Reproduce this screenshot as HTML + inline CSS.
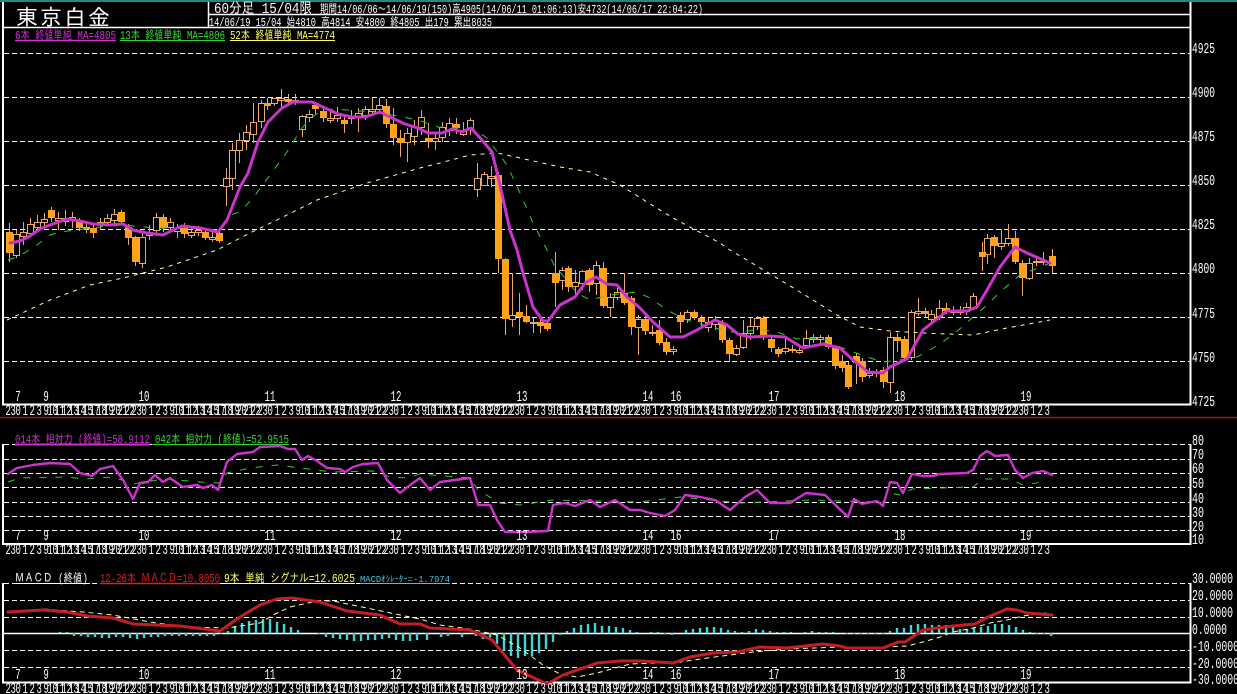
<!DOCTYPE html>
<html lang="ja"><head><meta charset="utf-8"><title>東京白金</title>
<style>
html,body{margin:0;padding:0;background:#000;width:1237px;height:694px;overflow:hidden}
svg{display:block}
text{font-family:"Liberation Mono","IPAGothic",monospace;fill:#fff}
.j{font-family:"Liberation Mono","IPAGothic",monospace}
.big{font-family:"IPAGothic","Noto Sans CJK JP",sans-serif}
</style></head><body>
<svg width="1237" height="694" viewBox="0 0 1237 694" xmlns="http://www.w3.org/2000/svg">
<defs>
<g id="hr" transform="scale(.6,1)"><text font-size="15" x="-9.2 -.8 7.5 19.2 30.8 42.5 54.2 60.8 69.2 72.5 80.8 84.2 92.5 95.8 104.2 107.5 115.8 119.2 127.5 130.8 139.2 142.5 150.8 154.2 162.5 165.8 174.2 177.5 185.8 189.2 197.5" y="0">2301239101112131415171819202122</text></g>
<g id="hl" transform="scale(.6,1)"><text font-size="15" x="-9.2 -.8 7.5 19.2 30.8 42.5" y="0">230123</text></g>
<g id="dates" transform="scale(.6,1)" font-size="15" text-anchor="middle">
<text x="30" y="0">7</text><text x="76.7" y="0">9</text><text x="240" y="0">10</text><text x="450" y="0">11</text><text x="660" y="0">12</text><text x="870" y="0">13</text><text x="1080" y="0">14</text><text x="1126.7" y="0">16</text><text x="1290" y="0">17</text><text x="1500" y="0">18</text><text x="1710" y="0">19</text></g>
<g id="hours"><use href="#hr" x="11"/><use href="#hr" x="137"/><use href="#hr" x="263"/><use href="#hr" x="389"/><use href="#hr" x="515"/><use href="#hr" x="641"/><use href="#hr" x="767"/><use href="#hr" x="893"/><use href="#hl" x="1019"/></g>
</defs>
<rect width="1237" height="694" fill="#000"/>
<rect width="1237" height="2" fill="#1f8a8a"/>

<!-- grids -->
<path d="M4 53.500H1190M4 97.500H1190M4 141.500H1190M4 185.500H1190M4 229.500H1190M4 273.500H1190M4 317.500H1190M4 361.500H1190M4 444.500H1190M4 459.500H1190M4 473.500H1190M4 487.500H1190M4 502.500H1190M4 516.500H1190M4 530.500H1190M4 583.500H1190M4 600.500H1190M4 617.500H1190M4 650.500H1190M4 667.500H1190" stroke="#fff" stroke-width="1" stroke-dasharray="5 3" fill="none"/>
<path d="M4 633.500H1190" stroke="#fff" stroke-width="1.500"/>

<!-- frames -->
<path d="M3 2V404.500H1190.500V2M3 444V544H1190.500V444M3 583V682.500H1190.500V583" stroke="#fff" stroke-width="2" fill="none"/>
<path d="M208.500 2V27M208 14.500H1190M3 27.500H1190" stroke="#fff" stroke-width="1.500" fill="none"/>
<path d="M0 417.500H1237" stroke="#a01818" stroke-width="1.500"/>

<!-- header -->
<text class="big" x="16" y="25" font-size="22" letter-spacing="2">東京白金</text>
<text x="214" y="13" font-size="15" textLength="98" lengthAdjust="spacingAndGlyphs">60分足 15/04限</text>
<text x="320" y="13" font-size="12" textLength="383" lengthAdjust="spacingAndGlyphs">期間14/06/06～14/06/19(150)高4905(14/06/11 01:06:13)安4732(14/06/17 22:04:22)</text>
<text x="209" y="26" font-size="12" textLength="283" lengthAdjust="spacingAndGlyphs">14/06/19 15/04 始4810 高4814 安4800 終4805 出179 累出8035</text>

<!-- main legend -->
<text x="15" y="39" font-size="12" textLength="101" lengthAdjust="spacingAndGlyphs" style="fill:#cc33cc">6本 終値単純 MA=4805</text>
<text x="120" y="39" font-size="12" textLength="105" lengthAdjust="spacingAndGlyphs" style="fill:#33dd33">13本 終値単純 MA=4806</text>
<text x="230" y="39" font-size="12" textLength="105" lengthAdjust="spacingAndGlyphs" style="fill:#ffff66">52本 終値単純 MA=4774</text>
<path d="M15 40.500H116" stroke="#cc33cc" stroke-width="1.500"/><path d="M120 40.500H225" stroke="#33cc33"/><path d="M230 40.500H335" stroke="#ffff66"/>

<!-- wicks -->
<path stroke="#e8a868" stroke-width="1" fill="none" d="M9.500 223V262M16.500 230V258M23.500 222V245M30.500 218V237M37.500 215V232M44.500 213V228M51.500 207V222M58.500 212V230M65.500 210V226M72.500 212V228M79.500 218V231M86.500 224V233M93.500 225V238M100.500 218V230M107.500 214V226M114.500 209V224M121.500 210V225M128.500 224V245M135.500 236V266M142.500 232V268M149.500 225V240M156.500 213V233M163.500 214V232M170.500 218V230M177.500 224V238M184.500 223V238M191.500 228V238M198.500 226V236M205.500 229V240M212.500 232V242M219.500 228V243M226.500 168V206M232.500 143V190M239.500 133V163M246.500 125V150M253.500 103V143M261.500 100V128M267.500 98V110M274.500 98V106M281.500 89V108M288.500 94V106M295.500 94V105M302.500 115V137M309.500 110V122M315.500 102V114M323.500 108V122M330.500 110V123M337.500 107V122M344.500 116V133M351.500 110V124M358.500 108V132M365.500 106V120M372.500 98V115M379.500 98V112M386.500 99V128M393.500 108V145M400.500 130V157M407.500 128V162M414.500 120V145M421.500 110V135M428.500 123V148M435.500 132V150M442.500 122V142M449.500 118V136M456.500 118V134M463.500 122V136M470.500 118V135M477.500 163V197M484.500 172V186M491.500 166V187M498.500 172V273M505.500 258V335M512.500 273V327M519.500 293V335M526.500 305V323M533.500 318V333M540.500 318V333M547.500 321V331M555.500 252V307M562.500 267V290M568.500 266V292M575.500 270V295M582.500 270V290M589.500 268V292M596.500 261V295M603.500 262V308M610.500 293V317M617.500 288V300M624.500 273V305M631.500 296V335M638.500 315V355M645.500 315V335M652.500 325V336M659.500 320V345M666.500 338V355M673.500 346V355M680.500 312V333M687.500 310V323M694.500 310V320M701.500 315V326M708.500 318V332M715.500 316V330M722.500 320V343M729.500 338V362M736.500 345V356M743.500 320V349M750.500 318V340M757.500 316V330M763.500 316V340M771.500 336V352M778.500 347V357M785.500 338V354M792.500 345V353M799.500 348V354M806.500 330V348M813.500 334V343M820.500 335V345M828.500 335V349M835.500 346V369M842.500 355V372M848.500 362V389M856.500 353V384M862.500 358V382M869.500 368V378M876.500 369V377M883.500 367V388M890.500 332V393M897.500 333V352M904.500 336V362M911.500 310V360M918.500 298V316M925.500 308V318M931.500 310V322M939.500 300V320M946.500 303V314M953.500 306V315M960.500 306V315M966.500 303V315M973.500 293V310M982.500 242V271M987.500 234V264M994.500 235V258M1001.500 229V250M1008.500 224V246M1015.500 231V264M1022.500 260V296M1029.500 258V280M1036.500 257V266M1043.500 252V265M1052.500 249V273"/>
<!-- hollow bodies -->
<path stroke="#e8a868" stroke-width="1" fill="#000" d="M13.500 234.500h6V255.500h-6zM20.500 232.500h6V236.500h-6zM27.500 224.500h6V233.500h-6zM34.500 222.500h6V227.500h-6zM41.500 219.500h6V222.500h-6zM55.500 218.500h6V220.500h-6zM62.500 218.500h6V221.500h-6zM69.500 217.500h6V220.500h-6zM97.500 222.500h6V224.500h-6zM104.500 218.500h6V222.500h-6zM111.500 214.500h6V220.500h-6zM139.500 237.500h6V263.500h-6zM146.500 232.500h6V235.500h-6zM153.500 217.500h6V230.500h-6zM167.500 222.500h6V227.500h-6zM174.500 228.500h6V231.500h-6zM188.500 232.500h6V235.500h-6zM195.500 230.500h6V232.500h-6zM209.500 237.500h6V239.500h-6zM223.500 178.500h6V186.500h-6zM229.500 150.500h6V178.500h-6zM236.500 140.500h6V150.500h-6zM243.500 132.500h6V140.500h-6zM250.500 122.500h6V134.500h-6zM258.500 103.500h6V121.500h-6zM271.500 98.500h6V103.500h-6zM278.500 98.500h6V100.500h-6zM292.500 100.500h6V101.500h-6zM299.500 116.500h6V129.500h-6zM306.500 114.500h6V117.500h-6zM327.500 118.500h6V120.500h-6zM334.500 115.500h6V118.500h-6zM348.500 116.500h6V118.500h-6zM355.500 113.500h6V117.500h-6zM362.500 109.500h6V115.500h-6zM369.500 109.500h6V111.500h-6zM376.500 105.500h6V109.500h-6zM404.500 133.500h6V142.500h-6zM411.500 127.500h6V136.500h-6zM418.500 117.500h6V127.500h-6zM432.500 138.500h6V141.500h-6zM439.500 127.500h6V137.500h-6zM446.500 123.500h6V130.500h-6zM460.500 130.500h6V134.500h-6zM467.500 120.500h6V129.500h-6zM474.500 178.500h6V189.500h-6zM481.500 174.500h6V185.500h-6zM488.500 176.500h6V178.500h-6zM509.500 315.500h6V319.500h-6zM530.500 322.500h6V323.500h-6zM559.500 270.500h6V280.500h-6zM572.500 282.500h6V286.500h-6zM579.500 271.500h6V283.500h-6zM593.500 265.500h6V283.500h-6zM607.500 297.500h6V307.500h-6zM614.500 292.500h6V297.500h-6zM635.500 319.500h6V327.500h-6zM649.500 332.500h6V333.500h-6zM670.500 349.500h6V351.500h-6zM684.500 312.500h6V319.500h-6zM705.500 322.500h6V327.500h-6zM712.500 320.500h6V324.500h-6zM733.500 348.500h6V354.500h-6zM740.500 333.500h6V347.500h-6zM747.500 326.500h6V333.500h-6zM754.500 318.500h6V326.500h-6zM782.500 348.500h6V351.500h-6zM796.500 350.500h6V352.500h-6zM803.500 338.500h6V345.500h-6zM810.500 337.500h6V339.500h-6zM817.500 337.500h6V339.500h-6zM866.500 373.500h6V375.500h-6zM887.500 337.500h6V382.500h-6zM908.500 312.500h6V357.500h-6zM915.500 311.500h6V313.500h-6zM928.500 314.500h6V319.500h-6zM936.500 308.500h6V316.500h-6zM950.500 310.500h6V312.500h-6zM957.500 310.500h6V312.500h-6zM963.500 307.500h6V311.500h-6zM970.500 296.500h6V308.500h-6zM984.500 238.500h6V254.500h-6zM998.500 243.500h6V246.500h-6zM1005.500 238.500h6V243.500h-6zM1026.500 263.500h6V278.500h-6zM1033.500 261.500h6V262.500h-6zM1040.500 261.500h6V262.500h-6z"/>
<!-- filled bodies -->
<path fill="#ffa21a" d="M6 232h7V253h-7zM48 210h7V218h-7zM76 222h7V228h-7zM83 227h7V229h-7zM90 228h7V233h-7zM118 212h7V222h-7zM125 227h7V238h-7zM132 237h7V262h-7zM160 217h7V228h-7zM181 228h7V234h-7zM202 232h7V238h-7zM216 233h7V241h-7zM264 103h7V106h-7zM285 99h7V102h-7zM312 105h7V109h-7zM320 111h7V118h-7zM341 120h7V124h-7zM383 106h7V124h-7zM390 124h7V138h-7zM397 138h7V143h-7zM425 138h7V142h-7zM453 124h7V128h-7zM495 175h7V259h-7zM502 259h7V319h-7zM516 312h7V317h-7zM523 316h7V322h-7zM537 322h7V326h-7zM544 323h7V329h-7zM552 273h7V283h-7zM565 268h7V287h-7zM586 270h7V285h-7zM600 268h7V306h-7zM621 293h7V303h-7zM628 298h7V327h-7zM642 319h7V331h-7zM656 330h7V343h-7zM663 342h7V352h-7zM677 315h7V322h-7zM691 312h7V317h-7zM698 318h7V322h-7zM719 323h7V340h-7zM726 340h7V354h-7zM760 318h7V337h-7zM768 339h7V348h-7zM775 349h7V354h-7zM789 349h7V351h-7zM825 337h7V347h-7zM832 348h7V366h-7zM839 361h7V368h-7zM845 365h7V387h-7zM853 356h7V363h-7zM859 361h7V377h-7zM873 372h7V374h-7zM880 370h7V382h-7zM894 337h7V341h-7zM901 339h7V358h-7zM922 311h7V314h-7zM943 308h7V311h-7zM979 252h7V257h-7zM991 237h7V246h-7zM1012 238h7V262h-7zM1019 263h7V278h-7zM1049 256h7V266h-7z"/>

<!-- main MAs -->
<polyline fill="none" stroke="#ffffa8" stroke-width="1" stroke-dasharray="4 5" points="7,320 50,300 90,285 123,278 167,267 217,250 250,233 283,217 317,200 367,183 420,168 440,163 470,155 497,153 520,158 560,167 590,172 620,185 647,202 673,218 720,243 730,250 767,272 800,292 837,315 860,327 890,331 923,333 973,335 1007,328 1050,320"/>
<polyline fill="none" stroke="#33cc33" stroke-width="1" stroke-dasharray="7 9" points="8,260 17,257 33,248 50,235 60,232 100,227 117,224 133,226 157,228 187,228 220,230 233,214 240,212 253,198 270,175 287,152 302,128 312,117 325,109 348,110 372,112 392,115 418,120 438,127 458,128 472,128 487,138 507,165 520,193 533,223 547,250 555,267 560,272 577,293 590,300 610,295 637,292 650,298 667,310 687,320 710,327 737,333 760,329 780,333 797,339 823,338 840,347 867,357 883,362 900,360 917,357 930,350 953,335 973,317 987,305 1000,292 1020,275 1033,270 1053,262"/>
<polyline fill="none" stroke="#cc33cc" stroke-width="3" stroke-linejoin="round" stroke-linecap="round" points="10,243 20,241 30,236 40,229 50,225 67,219 80,221 93,224 110,225 123,224 133,230 147,233 163,235 173,230 182,226 200,228 218,232 227,220 240,187 248,173 258,142 268,122 282,108 293,102 312,102 325,108 338,114 352,117 365,117 380,112 392,118 405,124 418,128 428,133 442,133 452,129 462,132 471,128 482,140 492,152 500,185 510,230 517,250 523,273 533,307 543,321 548,321 560,305 575,297 585,283 596,277 607,284 617,285 627,297 640,308 653,322 670,337 683,337 697,330 715,320 727,325 738,334 750,337 770,336 785,337 803,348 823,344 840,348 853,360 868,372 883,373 890,367 907,359 923,330 947,311 967,311 977,307 987,290 1000,267 1015,247 1027,253 1050,263"/>

<!-- main axis -->
<g font-size="15">
<text x="1192" y="53" textLength="23" lengthAdjust="spacingAndGlyphs">4925</text>
<text x="1192" y="97" textLength="23" lengthAdjust="spacingAndGlyphs">4900</text>
<text x="1192" y="141" textLength="23" lengthAdjust="spacingAndGlyphs">4875</text>
<text x="1192" y="185" textLength="23" lengthAdjust="spacingAndGlyphs">4850</text>
<text x="1192" y="229" textLength="23" lengthAdjust="spacingAndGlyphs">4825</text>
<text x="1192" y="273" textLength="23" lengthAdjust="spacingAndGlyphs">4800</text>
<text x="1192" y="318" textLength="23" lengthAdjust="spacingAndGlyphs">4775</text>
<text x="1192" y="362" textLength="23" lengthAdjust="spacingAndGlyphs">4750</text>
<text x="1192" y="406" textLength="23" lengthAdjust="spacingAndGlyphs">4725</text>
</g>
<use href="#dates" y="401"/><use href="#hours" y="415"/>

<!-- RSI -->
<text x="15" y="443" font-size="12" textLength="135" lengthAdjust="spacingAndGlyphs" style="fill:#cc33cc">014本 相対力 (終値)=58.9112</text>
<text x="155" y="443" font-size="12" textLength="134" lengthAdjust="spacingAndGlyphs" style="fill:#33dd33">042本 相対力 (終値)=52.9515</text>
<path d="M15 444.500H150" stroke="#cc33cc" stroke-width="2"/><path d="M152 444.500H289" stroke="#33cc33"/>
<polyline fill="none" stroke="#33cc33" stroke-width="1" stroke-dasharray="7 9" points="8,482 20,478 67,477 83,479 113,477 133,484 143,482 167,479 200,482 220,483 227,473 250,468 277,465 300,468 333,472 373,471 390,477 407,478 420,474 470,478 478,490 500,503 520,505 553,500 640,502 680,497 740,503 810,500 840,501 883,502 890,493 900,495 912,489 940,488 973,487 983,479 1010,479 1023,485 1043,482"/>
<polyline fill="none" stroke="#cc33cc" stroke-width="2.400" stroke-linejoin="round" stroke-linecap="round" points="8,474 17,468 33,465 50,463 70,464 80,473 92,476 100,469 113,466 123,480 133,499 140,483 148,482 155,475 163,482 170,478 183,487 197,485 203,488 212,485 218,490 227,462 237,454 253,452 260,447 280,446 288,449 295,449 302,460 308,456 317,461 327,468 340,469 345,472 353,467 363,464 378,463 387,480 400,493 410,485 420,478 430,490 440,482 470,478 478,505 490,505 497,520 505,532 525,532 548,531 553,505 565,503 575,506 590,500 600,507 615,500 630,510 640,510 650,513 665,516 675,510 685,495 700,497 715,500 730,510 745,497 757,490 770,503 790,503 806,493 825,495 848,517 854,499 862,504 877,501 883,506 890,482 897,483 903,493 912,474 923,476 933,476 940,474 967,473 973,470 980,456 987,451 995,456 1008,455 1015,470 1023,478 1032,473 1043,471 1052,475"/>
<g font-size="15">
<text x="1192" y="445" textLength="12" lengthAdjust="spacingAndGlyphs">80</text>
<text x="1192" y="459" textLength="12" lengthAdjust="spacingAndGlyphs">70</text>
<text x="1192" y="473" textLength="12" lengthAdjust="spacingAndGlyphs">60</text>
<text x="1192" y="488" textLength="12" lengthAdjust="spacingAndGlyphs">50</text>
<text x="1192" y="503" textLength="12" lengthAdjust="spacingAndGlyphs">40</text>
<text x="1192" y="517" textLength="12" lengthAdjust="spacingAndGlyphs">30</text>
<text x="1192" y="531" textLength="12" lengthAdjust="spacingAndGlyphs">20</text>
<text x="1192" y="544" textLength="12" lengthAdjust="spacingAndGlyphs">10</text>
</g>
<use href="#dates" y="540"/><use href="#hours" y="554"/>

<!-- MACD -->
<text x="15" y="582" font-size="12" textLength="73" lengthAdjust="spacingAndGlyphs">ＭＡＣＤ (終値)</text>
<text x="100" y="582" font-size="12" textLength="120" lengthAdjust="spacingAndGlyphs" style="fill:#e02020">12-26本 ＭＡＣＤ=10.8050</text>
<text x="224" y="582" font-size="12" textLength="131" lengthAdjust="spacingAndGlyphs" style="fill:#ffff66">9本 単純 シグナル=12.6025</text>
<text x="360" y="582" font-size="9" textLength="90" lengthAdjust="spacingAndGlyphs" style="fill:#40c8d8">MACDｵｼﾚｰﾀｰ=-1.7974</text>
<path d="M15 583.500H90" stroke="#fff"/><path d="M100 583.500H220" stroke="#e02020" stroke-width="1.500"/><path d="M224 583.500H355" stroke="#ffff66"/><path d="M360 583.500H450" stroke="#40c8d8"/>
<path stroke="#44d4d8" stroke-width="2.400" fill="none" d="M60 633v-1M67 633v-1M74 633v3M81 633v3M88 633v4M95 633v4M102 633v5M109 633v5M116 633v4M123 633v4M130 633v5M137 633v6M144 633v5M151 633v4M158 633v4M165 633v3M172 633v3M179 633v3M186 633v3M193 633v3M200 633v3M207 633v3M214 633v3M221 633v1M228 633v-2M235 633v-7M242 633v-10M249 633v-12M256 633v-13M263 633v-14M270 633v-14M277 633v-11M284 633v-9M291 633v-6M298 633v-3M319 633v1M326 633v4M333 633v5M340 633v6M347 633v7M354 633v8M361 633v8M368 633v7M375 633v7M382 633v6M389 633v5M396 633v7M403 633v8M410 633v8M417 633v7M427 633v7M441 633v4M448 633v3M462 633v4M476 633v3M483 633v6M490 633v7M497 633v11M504 633v18M511 633v23M518 633v25M525 633v23M532 633v23M539 633v20M546 633v16M553 633v9M560 633v2M567 633v-2M574 633v-5M581 633v-8M588 633v-9M595 633v-10M602 633v-7M609 633v-7M616 633v-6M623 633v-5M630 633v-3M637 633v-1M651 633v-1M658 633v-1M665 633v1M672 633v2M686 633v-3M693 633v-4M700 633v-5M707 633v-6M714 633v-6M721 633v-5M728 633v-3M735 633v-2M742 633v-1M749 633v-2M756 633v-4M763 633v-3M770 633v-2M777 633v-1M784 633v-1M791 633v-1M805 633v-1M812 633v-2M819 633v-1M826 633v-1M833 633v-1M847 633v1M854 633v1M861 633v1M868 633v1M875 633v1M883 633v1M890 633v-2M897 633v-5M904 633v-5M911 633v-8M918 633v-9M925 633v-9M932 633v-8M939 633v-8M946 633v-8M953 633v-7M960 633v-4M967 633v-4M974 633v-5M981 633v-6M988 633v-7M995 633v-9M1002 633v-9M1009 633v-8M1016 633v-6M1023 633v-3M1030 633v-1M1037 633v1M1044 633v1M1051 633v3"/>
<polyline fill="none" stroke="#ffffa8" stroke-width="1" stroke-dasharray="5 4" points="8,613 43,609 83,612 113,615 150,622 187,627 227,628 260,623 273,615 290,607 317,601 333,601 367,608 400,615 420,619 440,625 470,629 497,635 520,648 543,665 560,674 577,677 597,673 630,664 680,662 707,658 753,652 787,649 840,647 883,647 907,646 923,642 940,637 953,632 973,628 990,623 1007,620 1023,616 1047,613"/>
<polyline fill="none" stroke="#c41e24" stroke-width="3" stroke-linejoin="round" stroke-linecap="round" points="8,612 43,610 67,612 87,616 113,618 133,624 180,626 220,631 240,617 260,605 277,599 292,598 320,602 347,611 380,615 400,624 420,624 430,628 470,630 492,640 507,658 517,670 547,684 563,675 597,663 620,661 643,661 673,663 690,657 713,653 737,652 760,647 787,648 823,644 840,646 847,648 883,648 898,642 905,642 923,630 937,628 953,626 975,624 988,617 1007,609 1017,610 1027,613 1052,615"/>
<g font-size="15">
<text x="1192" y="583" textLength="41" lengthAdjust="spacingAndGlyphs">30.0000</text>
<text x="1192" y="600" textLength="41" lengthAdjust="spacingAndGlyphs">20.0000</text>
<text x="1192" y="617" textLength="41" lengthAdjust="spacingAndGlyphs">10.0000</text>
<text x="1192" y="634" textLength="35" lengthAdjust="spacingAndGlyphs">0.0000</text>
<text x="1192" y="651" textLength="47" lengthAdjust="spacingAndGlyphs">-10.0000</text>
<text x="1192" y="668" textLength="47" lengthAdjust="spacingAndGlyphs">-20.0000</text>
<text x="1192" y="684" textLength="47" lengthAdjust="spacingAndGlyphs">-30.0000</text>
</g>
<use href="#dates" y="679"/><use href="#hours" y="693"/>
</svg>
</body></html>
